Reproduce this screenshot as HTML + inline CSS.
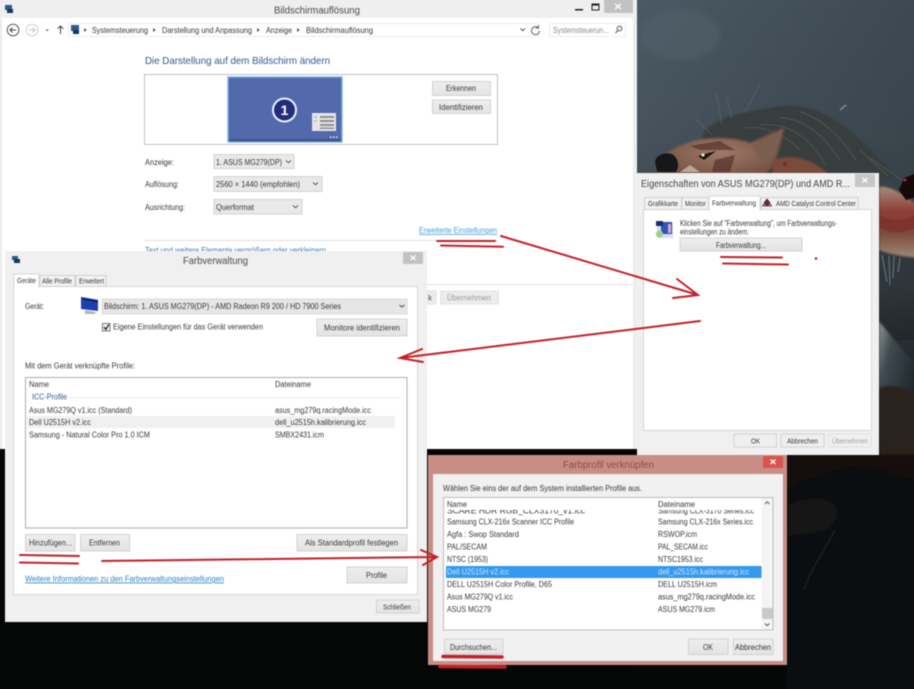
<!DOCTYPE html>
<html lang="de"><head><meta charset="utf-8"><title>Bildschirmauflösung</title>
<style>
html,body{margin:0;padding:0;background:#050606;width:914px;height:689px;overflow:hidden}
#w{position:absolute;left:0;top:0;width:914px;height:689px;overflow:hidden;contain:paint}
svg{display:block;position:absolute;left:-6px;top:-6px;filter:blur(.4px)}
text{font-family:"Liberation Sans",sans-serif;font-size:8px;fill:#383838}
.b{fill:#e8e8e8;stroke:#d2d2d2;stroke-width:1}
</style></head><body>
<div id="w">
<svg width="926" height="701" viewBox="-6 -6 926 701" xmlns="http://www.w3.org/2000/svg">
<defs>
<linearGradient id="wall" gradientUnits="userSpaceOnUse" x1="0" y1="0" x2="0" y2="689"><stop offset="0" stop-color="#4a5963"/><stop offset=".2" stop-color="#46535c"/><stop offset=".42" stop-color="#363f46"/><stop offset=".6" stop-color="#14181b"/><stop offset=".7" stop-color="#08090a"/><stop offset="1" stop-color="#060707"/></linearGradient>
<linearGradient id="wallr" x1="0" y1="0" x2="1" y2="0"><stop offset="0" stop-color="#000" stop-opacity="0"/><stop offset="1" stop-color="#000" stop-opacity=".18"/></linearGradient>
<linearGradient id="btn" x1="0" y1="0" x2="0" y2="1"><stop offset="0" stop-color="#eeeeee"/><stop offset="1" stop-color="#e4e4e4"/></linearGradient>
<linearGradient id="arm" x1="0" y1="0" x2="0" y2="1"><stop offset="0" stop-color="#a98a7c"/><stop offset=".35" stop-color="#8c3d35"/><stop offset=".65" stop-color="#7a4a3c"/><stop offset="1" stop-color="#a08a78"/></linearGradient>
<linearGradient id="fur" x1="0" y1="0" x2="1" y2=".5"><stop offset="0" stop-color="#8d9594"/><stop offset=".35" stop-color="#3f4a50"/><stop offset="1" stop-color="#20282c"/></linearGradient>
<radialGradient id="head" cx=".5" cy=".5" r=".6"><stop offset="0" stop-color="#a07a68"/><stop offset="1" stop-color="#6e4a3c"/></radialGradient>
<filter id="s1"><feGaussianBlur stdDeviation="1"/></filter>
<filter id="s3"><feGaussianBlur stdDeviation="3"/></filter>
</defs>

<!-- wallpaper -->
<rect x="-6" y="-6" width="926" height="701" fill="#050606"/>
<rect x="637" y="-6" width="283" height="701" fill="url(#wall)"/>
<rect x="637" y="-6" width="283" height="346" fill="url(#wallr)"/>
<rect x="787" y="450" width="133" height="245" fill="#0b0e10"/>
<ellipse cx="680" cy="35" rx="40" ry="25" fill="#56666f" opacity=".4" filter="url(#s3)"/>
<!-- hair -->
<path d="M704 132C718 116 745 112 770 108C790 103 812 106 832 118C852 130 872 150 896 178L840 178L770 172L700 150Z" fill="#393c3d" filter="url(#s1)"/>
<g stroke="#666d70" stroke-width=".7" fill="none" opacity=".7"><path d="M722 124L716 92"/><path d="M732 118L726 96"/><path d="M745 112L760 84"/><path d="M712 135L695 118"/><path d="M860 150L888 176"/><path d="M870 158L905 182"/><path d="M780 118C800 118 820 130 840 160"/><path d="M760 125C785 122 810 135 825 165"/><path d="M800 112C820 118 840 135 856 160"/><path d="M745 128C765 125 785 135 800 150"/></g>
<path d="M840 110L846 105" stroke="#a5b0b5" stroke-width="1"/>
<!-- head -->
<path d="M656 165C660 155 675 147 690 142C710 136 735 137 750 143C762 138 775 130 785 127C782 140 778 155 772 168L760 178H655Z" fill="url(#head)" filter="url(#s1)"/>
<path d="M752 146C765 138 775 133 783 129C780 143 775 155 767 165C760 160 755 152 752 146Z" fill="#7a5e50"/>
<path d="M655 162C656 155 664 152 672 154C678 158 680 165 676 172H657Z" fill="#15171a"/>
<path d="M698 156L716 151L704 160Z" fill="#1b1412"/><circle cx="703" cy="155" r="1.6" fill="#e8e8e8"/>
<path d="M680 172L690 165L700 172Z" fill="#b9a79a"/>
<path d="M690 146L720 141L735 150L700 150ZM715 160L735 155L730 172L712 172Z" fill="#4a2a24" opacity=".6"/>
<path d="M773 160C790 153 815 158 832 178H772Z" fill="#7a4c3e" filter="url(#s1)"/><circle cx="785" cy="164" r="2" fill="#7c2a25"/>
<!-- right arm -->
<path d="M879 187C890 185 905 195 920 207V258C900 256 888 254 879 250Z" fill="url(#arm)" filter="url(#s1)"/>
<path d="M899 190L904 178L920 172V196L906 200Z" fill="#15090a"/><circle cx="905" cy="180" r="1.5" fill="#b0303a"/>
<path d="M880 215C890 222 905 222 920 212V226C900 236 888 232 880 228Z" fill="#7d2d28" opacity=".75"/>
<g stroke="#a7aeb1" stroke-width="1" opacity=".55"><path d="M882 255L887 282"/><path d="M889 256L890 285"/><path d="M894 256L893 278"/><path d="M900 258L898 272"/></g>
<path d="M879 322C888 330 900 350 920 366V400C900 392 890 388 879 392Z" fill="url(#fur)" filter="url(#s1)"/>
<path d="M879 388C895 382 905 390 920 396V460H879Z" fill="#2a201b" filter="url(#s1)"/>
<!-- bottom right shapes -->
<path d="M787 455H920V482L880 470L850 466L800 482L787 490Z" fill="#120f0d" filter="url(#s1)"/>
<path d="M788 505C805 498 825 495 835 505C840 515 835 530 818 532L788 536Z" fill="#151413" filter="url(#s1)"/>
<path d="M835 530C825 550 810 570 804 590" stroke="#23292c" stroke-width="1" fill="none"/>

<!-- main window -->
<rect x="-6" y="-6" width="643" height="455" fill="#ededed"/>
<rect x="2" y="18" width="631" height="431" fill="#fff"/>
<rect x="-6" y="-6" width="643" height="24" fill="#efefef"/>
<rect x="604" y="-6" width="29" height="19" fill="#c2c2c2"/>
<path d="M615 4L621 9M621 4L615 9" stroke="#fff" stroke-width="1.4"/>
<rect x="575" y="9" width="8" height="1.5" fill="#222"/>
<rect x="592" y="4" width="7" height="6" fill="none" stroke="#222" stroke-width="1"/><rect x="592" y="4" width="7" height="1.6" fill="#222"/>
<rect x="5" y="5" width="7" height="5" fill="#2a5d8f"/><rect x="7" y="9" width="6" height="4" fill="#17375c"/>
<text x="274" y="13.5" textLength="86" lengthAdjust="spacingAndGlyphs" style="font-size:10px;fill:#4a4a4a">Bildschirmauflösung</text>

<circle cx="13" cy="30" r="5.8" fill="#fff" stroke="#555" stroke-width="1"/><path d="M16 30H10M12.5 27.5L10 30L12.5 32.5" fill="none" stroke="#444" stroke-width="1"/>
<circle cx="32" cy="30" r="5.8" fill="#fff" stroke="#cfcfcf" stroke-width="1"/><path d="M29 30H35M32.5 27.5L35 30L32.5 32.5" fill="none" stroke="#c4c4c4" stroke-width="1"/>
<path d="M45.5 29.5H49L47.2 31.3Z" fill="#666"/>
<path d="M60.5 34V26M57.7 28.8L60.5 26L63.3 28.8" fill="none" stroke="#444" stroke-width="1"/>
<rect x="68.5" y="23.5" width="470" height="13" fill="#fff" stroke="#ececec"/>
<rect x="71" y="25" width="8" height="6" fill="#2a5d8f"/><rect x="73" y="30" width="6" height="4" fill="#17375c"/>
<path d="M84 28L87 30L84 32Z M153 28L156 30L153 32Z M257 28L260 30L257 32Z M297 28L300 30L297 32Z" fill="#666"/>
<text x="92" y="33" textLength="56" lengthAdjust="spacingAndGlyphs">Systemsteuerung</text>
<text x="162" y="33" textLength="90" lengthAdjust="spacingAndGlyphs">Darstellung und Anpassung</text>
<text x="266" y="33" textLength="26" lengthAdjust="spacingAndGlyphs">Anzeige</text>
<text x="306" y="33" textLength="67" lengthAdjust="spacingAndGlyphs">Bildschirmauflösung</text>
<path d="M520.5 28.5L522.7 30.7L525 28.5" fill="none" stroke="#555" stroke-width="1"/>
<path d="M538 27.5A4 4 0 1 0 539.5 31M538.5 25V28H535.5" fill="none" stroke="#666" stroke-width="1"/>
<rect x="549.5" y="23.5" width="76" height="13" fill="#fff" stroke="#ececec"/>
<text x="553" y="33" textLength="56" lengthAdjust="spacingAndGlyphs" style="fill:#8a8a8a">Systemsteuerun...</text>
<circle cx="619.5" cy="28.5" r="2.4" fill="none" stroke="#555"/><path d="M617.7 30.5L615.5 33" stroke="#555"/>

<text x="145" y="64" textLength="185" lengthAdjust="spacingAndGlyphs" style="font-size:10.5px;fill:#2f5a8a">Die Darstellung auf dem Bildschirm ändern</text>
<rect x="144.5" y="74.5" width="353" height="70" fill="#fff" stroke="#c2c2c2"/>
<rect x="228" y="77" width="114" height="65" fill="#5269ab" stroke="#7cb5e2" stroke-width="1.4"/>
<rect x="229" y="139" width="112" height="2.5" fill="#3f5393"/>
<circle cx="284.5" cy="110" r="11.5" fill="#222d7c" stroke="#eef1fa" stroke-width="2"/>
<text x="280.5" y="115" textLength="8" lengthAdjust="spacingAndGlyphs" style="font-size:14px;font-weight:bold;fill:#fff">1</text>
<rect x="312" y="113" width="24" height="18" fill="#e6e6e4"/>
<g fill="#8e8e96"><rect x="314" y="116" width="3" height="2" fill="#c4c4c4"/><rect x="314" y="120" width="3" height="2" fill="#c4c4c4"/><rect x="320" y="116" width="14" height="2"/><rect x="320" y="120" width="14" height="2"/><rect x="320" y="124" width="14" height="2"/><rect x="320" y="127.5" width="14" height="1.5"/></g>
<g fill="#e6e9f4"><rect x="330" y="136.5" width="1.5" height="1.5"/><rect x="333" y="136.5" width="1.5" height="1.5"/><rect x="336" y="136.5" width="1.5" height="1.5"/></g>
<rect class="b" x="432.5" y="81.5" width="58" height="14" style="fill:url(#btn)"/>
<text x="446" y="91" textLength="30" lengthAdjust="spacingAndGlyphs">Erkennen</text>
<rect class="b" x="432.5" y="100" width="58" height="13.5" style="fill:url(#btn)"/>
<text x="439" y="110" textLength="44" lengthAdjust="spacingAndGlyphs">Identifizieren</text>

<text x="145" y="165" textLength="29" lengthAdjust="spacingAndGlyphs">Anzeige:</text>
<rect class="b" x="214" y="154.5" width="80" height="14" style="fill:#e9e9e9"/>
<text x="216" y="165" textLength="66" lengthAdjust="spacingAndGlyphs">1. ASUS MG279(DP)</text>
<path d="M286 160.5L288.5 162.7L291 160.5" fill="none" stroke="#555"/>
<text x="145" y="187" textLength="34" lengthAdjust="spacingAndGlyphs">Auflösung:</text>
<rect class="b" x="214" y="176.5" width="108" height="15" style="fill:#e9e9e9"/>
<text x="216" y="187" textLength="84" lengthAdjust="spacingAndGlyphs">2560 × 1440 (empfohlen)</text>
<path d="M313 182.5L315.5 184.7L318 182.5" fill="none" stroke="#555"/>
<text x="145" y="210" textLength="40" lengthAdjust="spacingAndGlyphs">Ausrichtung:</text>
<rect class="b" x="214" y="199.5" width="88" height="14.5" style="fill:#e9e9e9"/>
<text x="216" y="210" textLength="38" lengthAdjust="spacingAndGlyphs">Querformat</text>
<path d="M293 205.5L295.5 207.7L298 205.5" fill="none" stroke="#555"/>
<text x="419" y="233" textLength="78" lengthAdjust="spacingAndGlyphs" style="fill:#4aa0d8;text-decoration:underline">Erweiterte Einstellungen</text>
<rect x="144" y="240" width="354" height="1" fill="#e2e2e2"/>
<text x="145" y="253" textLength="181" lengthAdjust="spacingAndGlyphs" style="fill:#3f74ab">Text und weitere Elemente vergrößern oder verkleinern</text>
<rect x="427" y="284" width="206" height="1" fill="#e2e2e2"/>
<rect x="420" y="291" width="16" height="13" fill="#ececec" stroke="#e2e2e2"/><text x="428" y="300.5" style="fill:#555">k</text>
<rect x="440.5" y="291" width="58" height="13" fill="#ececec" stroke="#e4e4e4"/>
<text x="447" y="300.5" textLength="44" lengthAdjust="spacingAndGlyphs" style="fill:#9b9b9b">Übernehmen</text>

<!-- Farbverwaltung dialog -->
<rect x="5" y="251" width="422" height="371" fill="#f0f0f0"/>
<rect x="403" y="252" width="20" height="12" fill="#c2c2c2"/>
<path d="M410.5 255.5L415.5 260M415.5 255.5L410.5 260" stroke="#fff" stroke-width="1.3"/>
<rect x="12" y="256" width="6" height="4" fill="#2a5d8f"/><rect x="14" y="259" width="6" height="4" fill="#17375c"/>
<text x="183" y="264" textLength="65" lengthAdjust="spacingAndGlyphs" style="font-size:10px;fill:#484848">Farbverwaltung</text>
<rect x="13.5" y="286.5" width="404" height="308" fill="#fff" stroke="#d6d6d6"/>
<rect x="14" y="274" width="25" height="13" fill="#fff" stroke="#d6d6d6"/><rect x="14.5" y="285.5" width="24" height="2" fill="#fff"/>
<rect x="40" y="275.5" width="35" height="11" fill="#f2f2f2" stroke="#d0d0d0"/>
<rect x="76" y="275.5" width="30" height="11" fill="#f2f2f2" stroke="#d0d0d0"/>
<text x="17" y="283" textLength="19" lengthAdjust="spacingAndGlyphs" style="font-size:7px">Geräte</text>
<text x="42" y="283.5" textLength="30" lengthAdjust="spacingAndGlyphs" style="font-size:7px">Alle Profile</text>
<text x="79" y="283.5" textLength="25" lengthAdjust="spacingAndGlyphs" style="font-size:7px">Erweitert</text>
<text x="25" y="309" textLength="19" lengthAdjust="spacingAndGlyphs">Gerät:</text>
<path d="M81 297L98 300V311L81 309Z" fill="#1d3fb0"/><path d="M81 297L98 300V303L84 300Z" fill="#10267a"/><path d="M85 310L95 312L96 314H85Z" fill="#b5b5b5"/>
<rect x="102" y="299" width="305" height="15" fill="#e6e6e6" stroke="#dcdcdc"/>
<text x="104" y="309" textLength="237" lengthAdjust="spacingAndGlyphs">Bildschirm: 1. ASUS MG279(DP) - AMD Radeon R9 200 / HD 7900 Series</text>
<path d="M399.5 305L402 307L404.5 305" fill="none" stroke="#444"/>
<rect x="102.5" y="323.5" width="7.5" height="7.5" fill="#f4f4f4" stroke="#777"/><path d="M104 327L105.8 329.5L108.8 324.5" fill="none" stroke="#222" stroke-width="1.3"/>
<text x="113" y="329.5" textLength="150" lengthAdjust="spacingAndGlyphs">Eigene Einstellungen für das Gerät verwenden</text>
<rect class="b" x="317" y="319" width="90" height="17" style="fill:url(#btn)"/>
<text x="324" y="330.5" textLength="76" lengthAdjust="spacingAndGlyphs">Monitore identifizieren</text>
<text x="25" y="368.5" textLength="110" lengthAdjust="spacingAndGlyphs">Mit dem Gerät verknüpfte Profile:</text>
<rect x="25.5" y="377.5" width="381.5" height="150.5" fill="#fff" stroke="#acacac"/>
<text x="29" y="387" textLength="20" lengthAdjust="spacingAndGlyphs">Name</text>
<text x="275" y="387" textLength="36" lengthAdjust="spacingAndGlyphs">Dateiname</text>
<text x="32" y="399.5" textLength="35" lengthAdjust="spacingAndGlyphs" style="fill:#2f5a8a">ICC-Profile</text>
<rect x="68" y="397" width="332" height="1" fill="#e6ecf2"/>
<text x="29" y="413" textLength="103" lengthAdjust="spacingAndGlyphs">Asus MG279Q v1.icc (Standard)</text>
<text x="275" y="413" textLength="96" lengthAdjust="spacingAndGlyphs">asus_mg279q.racingMode.icc</text>
<rect x="27" y="416" width="368" height="12" fill="#f0f0f0"/>
<text x="29" y="425" textLength="62" lengthAdjust="spacingAndGlyphs">Dell U2515H v2.icc</text>
<text x="275" y="425" textLength="91" lengthAdjust="spacingAndGlyphs">dell_u2515h.kalibrierung.icc</text>
<text x="29" y="437.5" textLength="121" lengthAdjust="spacingAndGlyphs">Samsung - Natural Color Pro 1.0 ICM</text>
<text x="275" y="437.5" textLength="49" lengthAdjust="spacingAndGlyphs">SMBX2431.icm</text>
<rect class="b" x="25.5" y="534.5" width="49.5" height="16.5" style="fill:url(#btn)"/>
<text x="29" y="545.5" textLength="43" lengthAdjust="spacingAndGlyphs">Hinzufügen...</text>
<rect class="b" x="80.5" y="534.5" width="49" height="16.5" style="fill:url(#btn)"/>
<text x="89" y="545.5" textLength="31" lengthAdjust="spacingAndGlyphs">Entfernen</text>
<rect class="b" x="297" y="534.5" width="110" height="16.5" style="fill:url(#btn)"/>
<text x="305" y="545.5" textLength="93" lengthAdjust="spacingAndGlyphs">Als Standardprofil festlegen</text>
<rect class="b" x="347" y="567" width="60" height="16" style="fill:url(#btn)"/>
<text x="366" y="578" textLength="21" lengthAdjust="spacingAndGlyphs">Profile</text>
<text x="25" y="581.5" textLength="199" lengthAdjust="spacingAndGlyphs" style="fill:#2f7fc0;text-decoration:underline">Weitere Informationen zu den Farbverwaltungseinstellungen</text>
<rect class="b" x="376.5" y="600" width="42.5" height="13" style="fill:url(#btn)"/>
<text x="383" y="609.5" textLength="28" lengthAdjust="spacingAndGlyphs" style="font-size:7px">Schließen</text>

<!-- Eigenschaften dialog -->
<rect x="637" y="173" width="242" height="282" fill="#f0f0f0"/>
<rect x="855" y="174" width="20" height="13" fill="#c6c6c6"/>
<path d="M862.5 178L867.5 182.5M867.5 178L862.5 182.5" stroke="#fff" stroke-width="1.3"/>
<text x="641" y="187" textLength="209" lengthAdjust="spacingAndGlyphs" style="font-size:10.5px;fill:#484848">Eigenschaften von ASUS MG279(DP) und AMD R...</text>
<rect x="643.5" y="209.5" width="228" height="221" fill="#fff" stroke="#d6d6d6"/>
<rect x="644.5" y="197.5" width="37" height="12" fill="#f2f2f2" stroke="#d0d0d0"/>
<rect x="682" y="197.5" width="26.5" height="12" fill="#f2f2f2" stroke="#d0d0d0"/>
<rect x="709" y="196" width="51" height="14" fill="#fff" stroke="#d6d6d6"/><rect x="709.5" y="208.5" width="50" height="2" fill="#fff"/>
<rect x="761" y="197.5" width="97" height="12" fill="#f2f2f2" stroke="#d0d0d0"/>
<text x="648" y="206" textLength="30" lengthAdjust="spacingAndGlyphs" style="font-size:7px">Grafikkarte</text>
<text x="685" y="206" textLength="21" lengthAdjust="spacingAndGlyphs" style="font-size:7px">Monitor</text>
<text x="712" y="205.5" textLength="44" lengthAdjust="spacingAndGlyphs" style="font-size:7.5px">Farbverwaltung</text>
<circle cx="767" cy="203" r="3" fill="#6b2a2e"/><path d="M762.5 206L767 199L771.5 206Z" fill="none" stroke="#3a2a2a" stroke-width=".8"/>
<text x="776" y="206" textLength="80" lengthAdjust="spacingAndGlyphs" style="font-size:7px">AMD Catalyst Control Center</text>
<rect x="657" y="223" width="16" height="15" fill="#d9dcea"/><rect x="661" y="222" width="11" height="12" fill="#2d55b8"/><rect x="656" y="221" width="7" height="5" fill="#1a2c6a"/><circle cx="659.5" cy="234" r="3.6" fill="#9fd08a"/><rect x="668" y="224" width="3" height="9" fill="#d8a4d8"/>
<text x="680" y="226" textLength="157" lengthAdjust="spacingAndGlyphs">Klicken Sie auf "Farbverwaltung", um Farbverwaltungs-</text>
<text x="680" y="234.5" textLength="69" lengthAdjust="spacingAndGlyphs">einstellungen zu ändern.</text>
<rect class="b" x="680" y="238" width="122" height="13" style="fill:url(#btn)"/>
<text x="716" y="248" textLength="50" lengthAdjust="spacingAndGlyphs">Farbverwaltung...</text>
<rect class="b" x="734" y="434" width="42.5" height="13" style="fill:#efefef"/>
<text x="751" y="443.5" textLength="9" lengthAdjust="spacingAndGlyphs" style="font-size:7px">OK</text>
<rect class="b" x="781" y="434" width="43" height="13" style="fill:#efefef"/>
<text x="787" y="443.5" textLength="31" lengthAdjust="spacingAndGlyphs" style="font-size:7px">Abbrechen</text>
<rect x="829" y="434" width="42" height="13" fill="#f0f0f0" stroke="#e0e0e0"/>
<text x="832" y="443.5" textLength="36" lengthAdjust="spacingAndGlyphs" style="font-size:7px;fill:#a0a0a0">Übernehmen</text>

<!-- Farbprofil dialog -->
<rect x="428" y="455" width="359" height="210" fill="#c88d85"/>
<rect x="433" y="474" width="350" height="187" fill="#f1f1f1"/>
<rect x="763" y="456" width="20" height="12" fill="#d9534f"/>
<path d="M770.5 459.5L775.5 464M775.5 459.5L770.5 464" stroke="#fff" stroke-width="1.3"/>
<text x="563" y="468" textLength="91" lengthAdjust="spacingAndGlyphs" style="font-size:10px;fill:#8a4d47">Farbprofil verknüpfen</text>
<text x="443" y="491" textLength="199" lengthAdjust="spacingAndGlyphs">Wählen Sie eins der auf dem System installierten Profile aus.</text>
<rect x="443.5" y="497.5" width="329.5" height="132.5" fill="#fff" stroke="#bcbcbc"/>
<text x="447" y="513.5" textLength="138" lengthAdjust="spacingAndGlyphs">SCARE HDR RGB_CLX3170_v1.icc</text>
<text x="658" y="513.5" textLength="96" lengthAdjust="spacingAndGlyphs">Samsung CLX-3170 Series.icc</text>
<rect x="444" y="498" width="317" height="12" fill="#fff"/>
<text x="447" y="507" textLength="20" lengthAdjust="spacingAndGlyphs">Name</text>
<text x="658" y="507" textLength="37" lengthAdjust="spacingAndGlyphs">Dateiname</text>
<text x="447" y="524.5" textLength="127" lengthAdjust="spacingAndGlyphs">Samsung CLX-216x Scanner ICC Profile</text>
<text x="658" y="524.5" textLength="95" lengthAdjust="spacingAndGlyphs">Samsung CLX-216x Series.icc</text>
<text x="447" y="537" textLength="72" lengthAdjust="spacingAndGlyphs">Agfa : Swop Standard</text>
<text x="658" y="537" textLength="39" lengthAdjust="spacingAndGlyphs">RSWOP.icm</text>
<text x="447" y="549.5" textLength="40" lengthAdjust="spacingAndGlyphs">PAL/SECAM</text>
<text x="658" y="549.5" textLength="50" lengthAdjust="spacingAndGlyphs">PAL_SECAM.icc</text>
<text x="447" y="562" textLength="41" lengthAdjust="spacingAndGlyphs">NTSC (1953)</text>
<text x="658" y="562" textLength="45" lengthAdjust="spacingAndGlyphs">NTSC1953.icc</text>
<rect x="446" y="566" width="315.5" height="12" fill="#3399ee"/>
<text x="447" y="574.5" textLength="62" lengthAdjust="spacingAndGlyphs" style="fill:#d2e6fa">Dell U2515H v2.icc</text>
<text x="658" y="574.5" textLength="91" lengthAdjust="spacingAndGlyphs" style="fill:#d2e6fa">dell_u2515h.kalibrierung.icc</text>
<text x="447" y="587" textLength="105" lengthAdjust="spacingAndGlyphs">DELL U2515H Color Profile, D65</text>
<text x="658" y="587" textLength="59" lengthAdjust="spacingAndGlyphs">DELL U2515H.icm</text>
<text x="447" y="599.5" textLength="66" lengthAdjust="spacingAndGlyphs">Asus MG279Q v1.icc</text>
<text x="658" y="599.5" textLength="97" lengthAdjust="spacingAndGlyphs">asus_mg279q.racingMode.icc</text>
<text x="447" y="612" textLength="44" lengthAdjust="spacingAndGlyphs">ASUS MG279</text>
<text x="658" y="612" textLength="57" lengthAdjust="spacingAndGlyphs">ASUS MG279.icm</text>
<rect x="762" y="498" width="10.5" height="131.5" fill="#f4f4f4"/>
<rect x="762" y="608" width="10.5" height="11" fill="#c9c9c9"/>
<path d="M765 504L767.2 501.8L769.5 504M765 623.5L767.2 625.7L769.5 623.5" fill="none" stroke="#555"/>
<rect class="b" x="444.5" y="639" width="58.5" height="15" style="fill:url(#btn)"/>
<text x="450" y="650" textLength="47" lengthAdjust="spacingAndGlyphs">Durchsuchen...</text>
<rect class="b" x="688.5" y="639" width="39.5" height="15.5" style="fill:url(#btn)"/>
<text x="703" y="650" textLength="10" lengthAdjust="spacingAndGlyphs">OK</text>
<rect class="b" x="733.5" y="639" width="39.5" height="15.5" style="fill:url(#btn)"/>
<text x="735" y="650" textLength="36" lengthAdjust="spacingAndGlyphs">Abbrechen</text>

<!-- red annotations -->
<g fill="none" stroke="#c61f28" stroke-linecap="round">
<path d="M437 241L495 241" stroke-width="2"/><path d="M441 245.5L503 246.8" stroke-width="2"/>
<path d="M721 257L782 257.5" stroke-width="2"/><path d="M723 263.5L788 264.5" stroke-width="2"/>
<path d="M501 236L698 295M677 279L698 295L673 298" stroke-width="2"/>
<path d="M700 321L400 358M422 349L400 358L423 362" stroke-width="2"/>
<path d="M20 555L79 556" stroke-width="2"/><path d="M20 562.5L78 563.5" stroke-width="2"/>
<path d="M102 561L437 557M421 550L437 557L423 565" stroke-width="2"/>
<path d="M443 656.5L502 657" stroke-width="3.5"/><path d="M440 666.5L505 667" stroke-width="3.5"/>
</g>
<circle cx="816" cy="258.5" r="1.3" fill="#c61f28"/>
</svg>
</div>
</body></html>
